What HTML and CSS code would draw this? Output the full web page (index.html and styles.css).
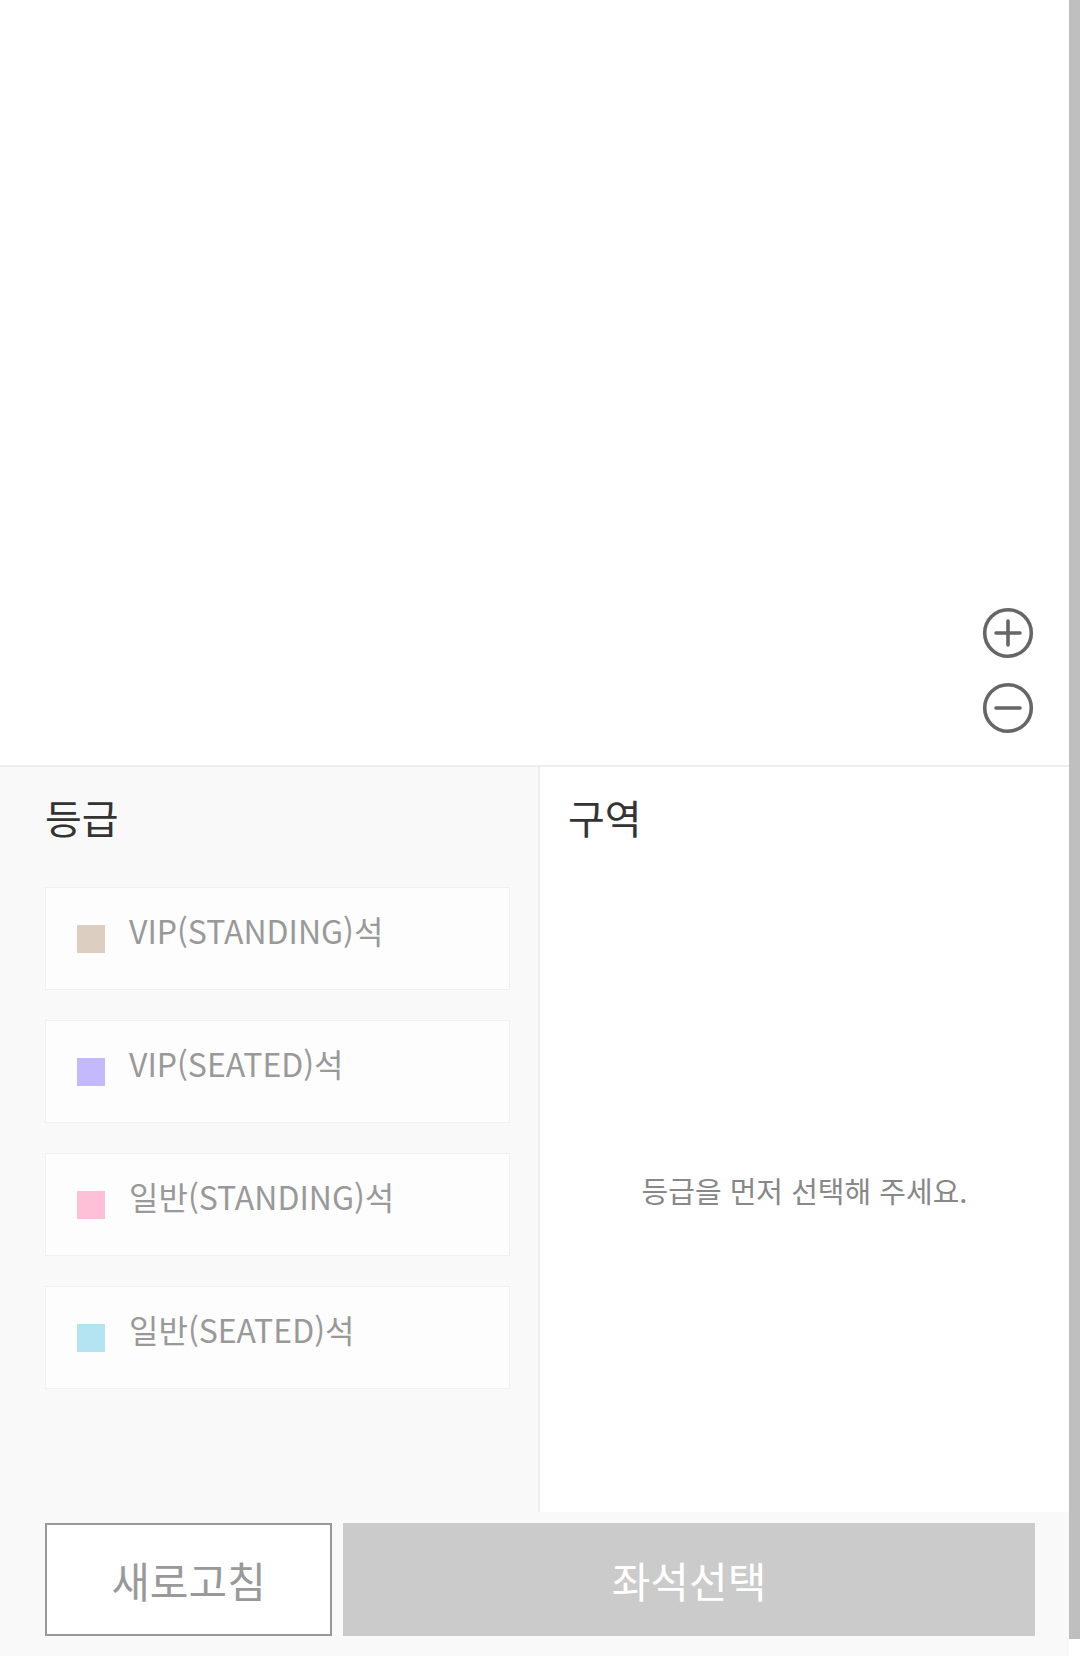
FILE: index.html
```html
<!DOCTYPE html>
<html lang="ko">
<head>
  <meta charset="UTF-8" />
  <title>좌석 선택</title>
  <meta name="viewport" content="width=device-width, initial-scale=1" />
  <link rel="stylesheet" href="styles.css">
</head>
<body>
  <div class="page">
    <div class="map">
      <div class="zoom">
        <button class="zoom-btn" aria-label="확대">
          <svg viewBox="0 0 52 52" width="52" height="52">
            <circle cx="26" cy="26" r="23.3" fill="none" stroke="#666" stroke-width="3.6" />
            <path d="M14 26h24M26 14v24" stroke="#666" stroke-width="3.6" stroke-linecap="round" />
          </svg>
        </button>
        <button class="zoom-btn" aria-label="축소">
          <svg viewBox="0 0 52 52" width="52" height="52">
            <circle cx="26" cy="26" r="23.3" fill="none" stroke="#666" stroke-width="3.6" />
            <path d="M14 26h24" stroke="#666" stroke-width="3.6" stroke-linecap="round" />
          </svg>
        </button>
      </div>
    </div>

    <div class="panels">
      <section class="grade">
        <h2>등급</h2>
        <ul class="grade-list">
          <li class="grade-item"><span class="swatch vip-standing"></span>VIP(STANDING)석</li>
          <li class="grade-item"><span class="swatch vip-seated"></span>VIP(SEATED)석</li>
          <li class="grade-item"><span class="swatch gen-standing"></span>일반(STANDING)석</li>
          <li class="grade-item"><span class="swatch gen-seated"></span>일반(SEATED)석</li>
        </ul>
      </section>
      <section class="area">
        <h2>구역</h2>
        <p class="empty">등급을 먼저 선택해 주세요.</p>
      </section>
    </div>

    <div class="actions">
      <button class="btn btn-refresh">새로고침</button>
      <button class="btn btn-select" disabled>좌석선택</button>
    </div>
  </div>
  <div class="scrollbar"></div>
</body>
</html>
```

FILE: styles.css
```css
body {
  margin: 0;
  font-family: "Noto Sans CJK KR", "Noto Sans", sans-serif;
  background: #fff;
  display: flex;
  align-items: flex-start;
  height: 1680px;
  overflow: hidden;
}
.page {
  flex: 1;
  display: flex;
  flex-direction: column;
}
.scrollbar {
  width: 11px;
  height: 1639px;
  background: #bfbfbf;
}

/* plan de salle */
.map {
  height: 765px;
  border-bottom: 2px solid #eee;
  display: flex;
  justify-content: flex-end;
  align-items: flex-end;
}
.zoom {
  display: flex;
  flex-direction: column;
  gap: 23px;
  padding: 0 35px 31px 0;
}
.zoom-btn {
  border: 0;
  padding: 0;
  background: none;
  width: 52px;
  height: 52px;
  display: block;
}
.zoom-btn svg {
  display: block;
}

/* panneaux */
.panels {
  display: flex;
  height: 745px;
}
.panels h2 {
  margin: 0;
  height: 100px;
  line-height: 100px;
  font-size: 40px;
  font-weight: 400;
  color: #333;
}
.grade {
  width: 465px;
  padding: 0 28px 0 45px;
  background: #f9f9f9;
}
.grade h2 {
  margin-bottom: 20px;
}
.grade-list {
  list-style: none;
  margin: 0;
  padding: 0;
  display: flex;
  flex-direction: column;
  gap: 30px;
}
.grade-item {
  box-sizing: border-box;
  height: 103px;
  display: flex;
  align-items: center;
  padding: 0 0 18px 31px;
  background: #fdfdfd;
  border: 1px solid #f0f0f0;
  font-size: 32px;
  color: #999;
}
.swatch {
  width: 28px;
  height: 28px;
  margin: 18px 24px 0 0;
  flex-shrink: 0;
}
.vip-standing { background: #dccfc1; }
.vip-seated { background: #c4b9fd; }
.gen-standing { background: #fdc0d6; }
.gen-seated { background: #b4e3f1; }

.area {
  flex: 1;
  border-left: 2px solid #eee;
  padding-left: 28px;
  display: flex;
  flex-direction: column;
}
.empty {
  flex: 1;
  margin: 0 0 0 -28px;
  display: flex;
  align-items: center;
  justify-content: center;
  font-size: 29px;
  color: #888;
}

/* boutons */
.actions {
  display: flex;
  gap: 11px;
  padding: 11px 34px 20px 45px;
  background: #f9f9f9;
}
.btn {
  height: 113px;
  font-family: inherit;
  font-size: 42px;
  padding: 0;
}
.btn-refresh {
  width: 287px;
  background: #fff;
  border: 2px solid #999;
  color: #999;
}
.btn-select {
  flex: 1;
  background: #cbcbcb;
  border: 0;
  color: #fff;
}
```
